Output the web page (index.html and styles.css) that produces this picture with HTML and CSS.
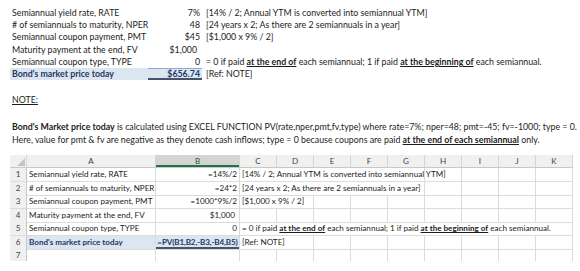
FILE: index.html
```html
<!DOCTYPE html>
<html>
<head>
<meta charset="utf-8">
<link rel="stylesheet" href="styles.css">
</head>
<body>
<div class="page">
  <div class="summary">
    <div class="lbl">Semiannual yield rate, RATE</div><div class="val">7%</div><div class="note">[14% / 2; Annual YTM is converted into semiannual YTM]</div>
    <div class="lbl"># of semiannuals to maturity, NPER</div><div class="val">48</div><div class="note">[24 years x 2; As there are 2 semiannuals in a year]</div>
    <div class="lbl">Semiannual coupon payment, PMT</div><div class="val">$45</div><div class="note">[$1,000 x 9% / 2]</div>
    <div class="lbl">Maturity payment at the end, FV</div><div class="val cur">$1,000</div><div class="note"></div>
    <div class="lbl">Semiannual coupon type, TYPE</div><div class="val">0</div><div class="note">= 0 if paid <b class="u">at the end of</b> each semiannual; 1 if paid <b class="u">at the beginning of</b> each semiannual.</div>
    <div class="lbl total">Bond's market price today</div><div class="val total totalval">$656.74</div><div class="note">[Ref: NOTE]</div>
  </div>

  <div class="notehead">NOTE:</div>
  <div class="para">
    <div><b>Bond's Market price today</b> is calculated using EXCEL FUNCTION PV(rate,nper,pmt,fv,type) where rate=7%; nper=48; pmt=-45; fv=-1000; type = 0.</div>
    <div>Here, value for pmt &amp; fv are negative as they denote cash inflows; type = 0 because coupons are paid <b class="u">at the end of each semiannual</b> only.</div>
  </div>

  <div class="sheet">
    <div class="srow head">
      <div class="corner"><svg width="8" height="8" viewBox="0 0 8 8"><polygon points="8,0 8,8 0,8" fill="#c4c4c4"/></svg></div>
      <div class="ch">A</div><div class="ch sel">B</div><div class="ch">C</div><div class="ch">D</div><div class="ch">E</div><div class="ch">F</div><div class="ch">G</div><div class="ch">H</div><div class="ch">I</div><div class="ch">J</div><div class="ch">K</div>
    </div>
    <div class="srow">
      <div class="rn">1</div><div class="c">Semiannual yield rate, RATE</div><div class="c r">=14%/2</div><div class="c s5">[14% / 2; Annual YTM is converted into semiannual YTM]</div><div class="c"></div><div class="c"></div><div class="c"></div><div class="c"></div>
    </div>
    <div class="srow">
      <div class="rn">2</div><div class="c"># of semiannuals to maturity, NPER</div><div class="c r">=24*2</div><div class="c s5">[24 years x 2; As there are 2 semiannuals in a year]</div><div class="c"></div><div class="c"></div><div class="c"></div><div class="c"></div>
    </div>
    <div class="srow">
      <div class="rn">3</div><div class="c">Semiannual coupon payment, PMT</div><div class="c r">=1000*9%/2</div><div class="c s2">[$1,000 x 9% / 2]</div><div class="c"></div><div class="c"></div><div class="c"></div><div class="c"></div><div class="c"></div><div class="c"></div><div class="c"></div>
    </div>
    <div class="srow">
      <div class="rn">4</div><div class="c">Maturity payment at the end, FV</div><div class="c r cur">$1,000</div><div class="c"></div><div class="c"></div><div class="c"></div><div class="c"></div><div class="c"></div><div class="c"></div><div class="c"></div><div class="c"></div><div class="c"></div>
    </div>
    <div class="srow">
      <div class="rn">5</div><div class="c">Semiannual coupon type, TYPE</div><div class="c r">0</div><div class="c s9">= 0 if paid <b class="u">at the end of</b> each semiannual; 1 if paid <b class="u">at the beginning of</b> each semiannual.</div>
    </div>
    <div class="srow">
      <div class="rn">6</div><div class="c total">Bond's market price today</div><div class="c total fx">=PV(B1,B2,-B3,-B4,B5)</div><div class="c s2">[Ref: NOTE]</div><div class="c"></div><div class="c"></div><div class="c"></div><div class="c"></div><div class="c"></div><div class="c"></div><div class="c"></div>
    </div>
    <div class="srow">
      <div class="rn">7</div><div class="c"></div><div class="c"></div><div class="c"></div><div class="c"></div><div class="c"></div><div class="c"></div><div class="c"></div><div class="c"></div><div class="c"></div><div class="c"></div><div class="c"></div>
    </div>
  </div>
</div>
</body>
</html>
```
FILE: styles.css
```css
html, body {
  margin: 0;
  padding: 0;
  background: #ffffff;
}
.page {
  width: 580px;
  height: 271px;
  overflow: hidden;
  font-family: Lato, "Open Sans", sans-serif;
  font-size: 8.8px;
  color: #1c1c1c;
}
b { font-weight: 700; }
.u { text-decoration: underline; }

.summary {
  display: grid;
  grid-template-columns: 138px 54px 1fr;
  grid-auto-rows: 12.2px;
  margin: 7px 0 0 10px;
  line-height: 12.2px;
  white-space: nowrap;
}
.lbl { padding-left: 2px; }
.val { text-align: right; padding-right: 2px; }
.val.cur { padding-right: 5px; }
.note { padding-left: 4px; }
.total {
  background: #dce6f1;
  color: #1f3864;
  font-weight: 700;
}
.totalval {
  box-shadow: inset 0 1px 0 #8eaad1, inset 0 -2px 0 #44546a;
}

.notehead {
  margin: 14px 0 0 12px;
  line-height: 12px;
  text-decoration: underline;
}
.para {
  margin: 15px 0 0 12px;
  line-height: 12.5px;
  white-space: nowrap;
}

.sheet {
  margin: 9px 0 0 10px;
  width: 563px;
  height: 106px;
  overflow: hidden;
  font-size: 8.1px;
}
.srow {
  display: grid;
  grid-template-columns: 17px 129px 84px repeat(9, 37px);
  height: 13.5px;
  line-height: 13px;
  white-space: nowrap;
}
.srow.head {
  height: 13px;
  background: #f0f0f0;
  border-bottom: 1px solid #c8c8c8;
  box-sizing: border-box;
  line-height: 12px;
}
.corner {
  display: flex;
  align-items: flex-end;
  justify-content: flex-end;
  padding: 0 1px 1px 0;
  border-right: 1px solid #d6d6d6;
}
.ch {
  text-align: center;
  color: #444;
  border-right: 1px solid #d6d6d6;
}
.ch.sel {
  background: #d4d4d4;
  box-shadow: inset 0 -2px 0 #217346;
  color: #1e5e3a;
}
.rn {
  background: #f0f0f0;
  color: #444;
  text-align: center;
  border-right: 1px solid #c8c8c8;
  border-bottom: 1px solid #dcdcdc;
}
.c {
  border-right: 1px solid #dcdcdc;
  border-bottom: 1px solid #dcdcdc;
  padding: 0 2px;
}
.r { text-align: right; }
.cur { padding-right: 4px; }
.s2 { grid-column: span 2; }
.s5 { grid-column: span 5; }
.s9 { grid-column: span 9; }
.fx {
  box-shadow: inset 0 -2px 0 #44546a;
  text-align: center;
  padding: 0;
  letter-spacing: -0.15px;
}
```
